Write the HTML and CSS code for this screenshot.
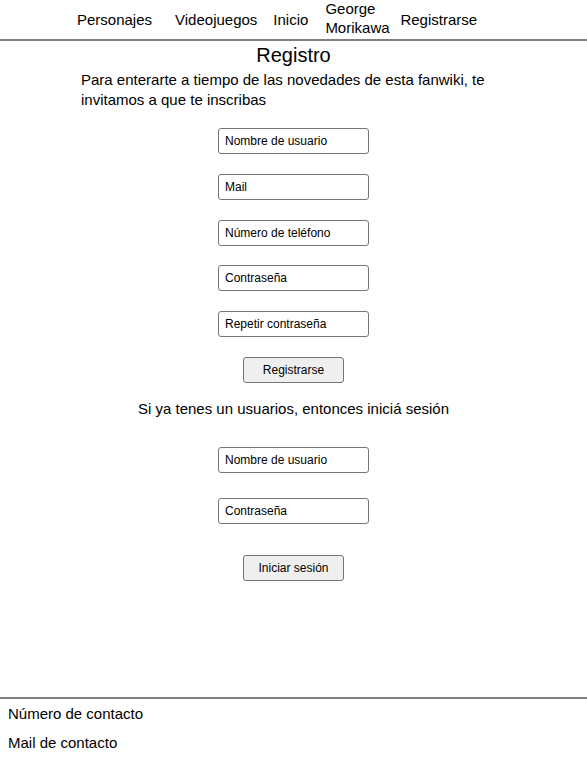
FILE: index.html
```
<!DOCTYPE html>
<html lang="es">
<head>
<meta charset="utf-8">
<title>Registro</title>
<link rel="stylesheet" href="styles.css">
</head>
<body>
<header class="topbar">
  <nav class="nav">
    <a class="nav-item nav-personajes" href="#">Personajes</a>
    <a class="nav-item nav-videojuegos" href="#">Videojuegos</a>
    <a class="nav-item nav-inicio" href="#">Inicio</a>
    <a class="nav-item nav-george" href="#">George Morikawa</a>
    <a class="nav-item" href="#">Registrarse</a>
  </nav>
</header>
<main class="main">
  <h1 class="title">Registro</h1>
  <p class="intro">Para enterarte a tiempo de las novedades de esta fanwiki, te invitamos a que te inscribas</p>
  <form class="form form-register">
    <input class="field" type="text" placeholder="Nombre de usuario">
    <input class="field" type="text" placeholder="Mail">
    <input class="field" type="text" placeholder="Número de teléfono">
    <input class="field" type="text" placeholder="Contraseña">
    <input class="field" type="text" placeholder="Repetir contraseña">
    <button class="btn" type="button">Registrarse</button>
  </form>
  <p class="login-text">Si ya tenes un usuarios, entonces iniciá sesión</p>
  <form class="form form-login">
    <input class="field" type="text" placeholder="Nombre de usuario">
    <input class="field" type="text" placeholder="Contraseña">
    <button class="btn btn-login" type="button">Iniciar sesión</button>
  </form>
</main>
<footer class="footer">
  <p class="footer-line">Número de contacto</p>
  <p class="footer-line">Mail de contacto</p>
</footer>
</body>
</html>
```
FILE: styles.css
```
* { box-sizing: border-box; }
html, body { margin: 0; padding: 0; }
body {
  font-family: "Liberation Sans", Arial, sans-serif;
  color: #000;
  background: #fff;
  font-size: 15px;
}
.topbar {
  border-bottom: 2px solid #808080;
  height: 41px;
}
.nav {
  display: flex;
  align-items: center;
  height: 39px;
  padding-left: 77px;
}
.nav-item {
  color: #000;
  text-decoration: none;
  font-size: 15px;
  line-height: 19px;
}
.nav-personajes { margin-right: 23px; }
.nav-videojuegos { margin-right: 16px; }
.nav-inicio { margin-right: 17px; }
.nav-george { width: 64px; margin-right: 11px; margin-top: -4px; }
.main {
  height: 656px;
  display: flex;
  flex-direction: column;
  align-items: center;
}
.title {
  font-size: 20px;
  font-weight: normal;
  margin: 2px 0 0;
  line-height: 24px;
}
.intro {
  width: 425px;
  margin: 3px 0 0;
  line-height: 20px;
  font-size: 15px;
}
.form {
  display: flex;
  flex-direction: column;
  align-items: center;
}
.form-register { margin-top: 18px; gap: 19.75px; }
.form-login { margin-top: 28px; gap: 25px; }
.field {
  width: 151px;
  height: 26px;
  font-family: "Liberation Sans", Arial, sans-serif;
  font-size: 12px;
  padding: 1px 6px;
  border: 1px solid #767676;
  border-radius: 3px;
  background: #fff;
  color: #000;
}
.field::placeholder { color: #000; opacity: 1; }
.btn {
  width: 101px;
  height: 26px;
  font-family: "Liberation Sans", Arial, sans-serif;
  font-size: 12px;
  border: 1px solid #767676;
  border-radius: 3px;
  background: #efefef;
  color: #000;
}
.btn-login { margin-top: 6px; }
.login-text {
  margin: 16px 0 0;
  line-height: 20px;
  font-size: 15px;
}
.footer {
  border-top: 2px solid #808080;
  padding: 5px 8px 0;
}
.footer-line {
  margin: 0 0 10px;
  font-size: 15px;
  line-height: 19px;
}
```
